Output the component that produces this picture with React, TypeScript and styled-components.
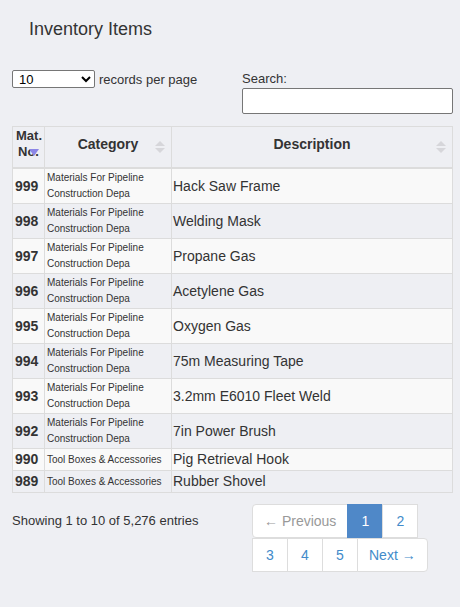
import styled, { createGlobalStyle } from "styled-components";

interface Item {
  no: string;
  category: string;
  description: string;
}

const items: Item[] = [
  { no: "999", category: "Materials For Pipeline Construction Depa", description: "Hack Saw Frame" },
  { no: "998", category: "Materials For Pipeline Construction Depa", description: "Welding Mask" },
  { no: "997", category: "Materials For Pipeline Construction Depa", description: "Propane Gas" },
  { no: "996", category: "Materials For Pipeline Construction Depa", description: "Acetylene Gas" },
  { no: "995", category: "Materials For Pipeline Construction Depa", description: "Oxygen Gas" },
  { no: "994", category: "Materials For Pipeline Construction Depa", description: "75m Measuring Tape" },
  { no: "993", category: "Materials For Pipeline Construction Depa", description: "3.2mm E6010 Fleet Weld" },
  { no: "992", category: "Materials For Pipeline Construction Depa", description: "7in Power Brush" },
  { no: "990", category: "Tool Boxes & Accessories", description: "Pig Retrieval Hook" },
  { no: "989", category: "Tool Boxes & Accessories", description: "Rubber Shovel" },
];

export default function App() {
  return (
    <>
      <GlobalStyle />
      <Page>
        <Title>Inventory Items</Title>
        <Controls>
          <LengthControl>
            <Select defaultValue="10">
              <option value="10">10</option>
              <option value="25">25</option>
              <option value="50">50</option>
              <option value="100">100</option>
            </Select>
            <span>records per page</span>
          </LengthControl>
          <SearchControl>
            <span>Search:</span>
            <SearchInput type="text" />
          </SearchControl>
        </Controls>

        <Table>
          <colgroup>
            <col style={{ width: 32 }} />
            <col style={{ width: 127 }} />
            <col />
          </colgroup>
          <thead>
            <tr>
              <HeadCell $sort="desc" $small>Mat. No.</HeadCell>
              <HeadCell $sort="both">Category</HeadCell>
              <HeadCell $sort="both">Description</HeadCell>
            </tr>
          </thead>
          <tbody>
            {items.map((item, i) => (
              <Row key={item.no} $odd={i % 2 === 0}>
                <NoCell>{item.no}</NoCell>
                <CategoryCell>{item.category}</CategoryCell>
                <DescCell>{item.description}</DescCell>
              </Row>
            ))}
          </tbody>
        </Table>

        <Footer>
          <Info>Showing 1 to 10 of 5,276 entries</Info>
          <Pagination>
            <PageButton $disabled $first>← Previous</PageButton>
            <PageButton $active>1</PageButton>
            <PageButton>2</PageButton>
            <PageButton>3</PageButton>
            <PageButton>4</PageButton>
            <PageButton>5</PageButton>
            <PageButton $last>Next →</PageButton>
          </Pagination>
        </Footer>
      </Page>
    </>
  );
}

const GlobalStyle = createGlobalStyle`
  html, body {
    margin: 0;
    padding: 0;
    background: #eeeff3;
  }
  body {
    font-family: "Liberation Sans", Arial, sans-serif;
    color: #333;
  }
`;

const Page = styled.div`
  width: 460px;
  min-height: 607px;
  box-sizing: border-box;
  padding: 18px 7px 0 12px;
`;

const Title = styled.h1`
  margin: 0 0 0 17px;
  font-size: 18px;
  font-weight: normal;
  line-height: 22px;
  color: #333;
`;

const Controls = styled.div`
  display: flex;
  justify-content: space-between;
  align-items: flex-start;
  margin-top: 30px;
  font-size: 13px;
`;

const LengthControl = styled.label`
  display: flex;
  align-items: center;
  gap: 4px;
`;

const Select = styled.select`
  width: 83px;
  height: 18px;
  font-family: "Liberation Sans", Arial, sans-serif;
  font-size: 13px;
  padding: 0 2px;
  border: 1px solid #767676;
  border-radius: 2px;
  background: #fff;
  color: #000;
`;

const SearchControl = styled.label`
  display: flex;
  flex-direction: column;
  width: 211px;
  line-height: 17px;
`;

const SearchInput = styled.input`
  box-sizing: border-box;
  width: 211px;
  height: 26px;
  margin-top: 1px;
  border: 1px solid #767676;
  border-radius: 2px;
  background: #fff;
`;

const Table = styled.table`
  margin-top: 12px;
  width: 441px;
  border-collapse: collapse;
  table-layout: fixed;
  border: 1px solid #dcdcdc;
`;

const HeadCell = styled.th<{ $sort: "both" | "desc"; $small?: boolean }>`
  position: relative;
  padding: 1px 3px 7px;
  font-size: ${(p) => (p.$small ? "13px" : "14px")};
  line-height: 16px;
  font-weight: bold;
  text-align: center;
  color: #333;
  border: 1px solid #dcdcdc;
  border-bottom: 2px solid #dcdcdc;
  background: #eeeff3;

  &::before,
  &::after {
    content: "";
    position: absolute;
    border-left: 5px solid transparent;
    border-right: 5px solid transparent;
  }

  ${(p) =>
    p.$sort === "both"
      ? `
    &::before {
      right: 6px;
      top: 50%;
      margin-top: -6px;
      border-bottom: 5px solid #d6d6da;
    }
    &::after {
      right: 6px;
      top: 50%;
      margin-top: 1px;
      border-top: 5px solid #d6d6da;
    }
  `
      : `
    &::before { display: none; }
    &::after {
      right: 5px;
      top: 50%;
      margin-top: 2px;
      border-top: 7px solid #8c86e6;
    }
  `}
`;

const Row = styled.tr<{ $odd: boolean }>`
  background: ${(p) => (p.$odd ? "#f9f9f9" : "#eeeff3")};
`;

const Cell = styled.td`
  border: 1px solid #dcdcdc;
  vertical-align: middle;
  color: #333;
`;

const NoCell = styled(Cell)`
  padding: 1px 2px;
  font-size: 14px;
  font-weight: bold;
  line-height: 19px;
`;

const CategoryCell = styled(Cell)`
  padding: 1px 2px;
  font-size: 10px;
  line-height: 16px;
`;

const DescCell = styled(Cell)`
  padding: 1px 1px;
  font-size: 14px;
  line-height: 19px;
`;

const Footer = styled.div`
  display: flex;
  justify-content: space-between;
  align-items: flex-start;
  margin-top: 11px;
`;

const Info = styled.div`
  font-size: 13px;
  line-height: 17px;
  padding-top: 8px;
`;

const Pagination = styled.div`
  display: flex;
  flex-wrap: wrap;
  width: 190px;
  margin-right: 10px;
`;

const PageButton = styled.a<{
  $active?: boolean;
  $disabled?: boolean;
  $first?: boolean;
  $last?: boolean;
}>`
  display: block;
  box-sizing: border-box;
  height: 34px;
  padding: 0 11px;
  margin-left: -1px;
  font-size: 14px;
  line-height: 32px;
  text-align: center;
  min-width: 36px;
  border: 1px solid #dddddd;
  background: ${(p) => (p.$active ? "#4f88c8" : "#fff")};
  color: ${(p) => (p.$active ? "#fff" : p.$disabled ? "#999" : "#428bca")};
  border-color: ${(p) => (p.$active ? "#4f88c8" : "#dddddd")};
  border-radius: ${(p) => (p.$first ? "4px 0 0 4px" : p.$last ? "0 4px 4px 0" : "0")};
  cursor: pointer;
`;
